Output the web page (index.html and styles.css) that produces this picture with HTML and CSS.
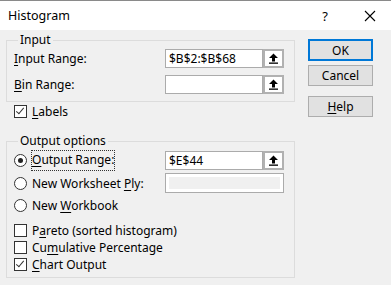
FILE: index.html
```html
<!DOCTYPE html>
<html>
<head>
<meta charset="utf-8">
<link rel="stylesheet" href="styles.css">
</head>
<body>
<div class="titlebar">
  <span class="title">Histogram</span>
  <span class="help-q">?</span>
  <svg class="close" width="12" height="12" viewBox="0 0 12 12"><path d="M1 1L11 11M11 1L1 11" stroke="#000" stroke-width="1.1"/></svg>
</div>
<div class="dialog">
  <div class="left">
    <fieldset class="group group-input">
      <legend>Input</legend>
      <div class="row">
        <span class="lbl"><u>I</u>nput Range:</span>
        <div class="refedit"><span class="box">$B$2:$B$68</span><span class="pick"><svg width="11" height="11" viewBox="0 0 11 11"><path d="M5.5 0.5L1 5H4V8.5H7V5H10Z" fill="#000"/><rect x="1" y="9.5" width="9" height="1.3" fill="#000"/></svg></span></div>
      </div>
      <div class="row">
        <span class="lbl"><u>B</u>in Range:</span>
        <div class="refedit"><span class="box"></span><span class="pick"><svg width="11" height="11" viewBox="0 0 11 11"><path d="M5.5 0.5L1 5H4V8.5H7V5H10Z" fill="#000"/><rect x="1" y="9.5" width="9" height="1.3" fill="#000"/></svg></span></div>
      </div>
    </fieldset>
    <div class="check-row labels-row"><span class="cb checked"></span><span><u>L</u>abels</span></div>
    <fieldset class="group group-output">
      <legend>Output options</legend>
      <div class="row">
        <span class="opt"><span class="radio on"></span><span class="focus"><u>O</u>utput Range:</span></span>
        <div class="refedit"><span class="box">$E$44</span><span class="pick"><svg width="11" height="11" viewBox="0 0 11 11"><path d="M5.5 0.5L1 5H4V8.5H7V5H10Z" fill="#000"/><rect x="1" y="9.5" width="9" height="1.3" fill="#000"/></svg></span></div>
      </div>
      <div class="row row2">
        <span class="opt"><span class="radio"></span><span class="txt">New Worksheet <u>P</u>ly:</span></span>
        <div class="disabled-box"></div>
      </div>
      <div class="opt solo"><span class="radio"></span><span class="txt">New <u>W</u>orkbook</span></div>
      <div class="checks">
        <div class="check-row"><span class="cb"></span><span>P<u>a</u>reto (sorted histogram)</span></div>
        <div class="check-row"><span class="cb"></span><span>Cu<u>m</u>ulative Percentage</span></div>
        <div class="check-row"><span class="cb checked"></span><span><u>C</u>hart Output</span></div>
      </div>
    </fieldset>
  </div>
  <div class="right">
    <button class="btn btn-ok">OK</button>
    <button class="btn">Cancel</button>
    <button class="btn btn-help"><u>H</u>elp</button>
  </div>
</div>
</body>
</html>
```

FILE: styles.css
```css
html, body {
  margin: 0;
  padding: 0;
}
body {
  width: 391px;
  height: 285px;
  overflow: hidden;
  background: #f0f0f0;
  font-family: "Noto Sans", "DejaVu Sans", sans-serif;
  font-size: 12px;
  color: #000;
}
u { text-decoration: underline; text-underline-offset: 2px; }

.titlebar {
  height: 29px;
  background: #fff;
  border-top: 1px solid #8a8a8a;
  display: flex;
  align-items: center;
  padding-left: 8px;
}
.title { font-size: 12.5px; flex: 1; }
.help-q { font-size: 13px; margin-right: 36px; }
.close { margin-right: 15px; }

.dialog {
  display: flex;
  padding-left: 6px;
}
.left { width: 289px; }
.right {
  margin-left: 13px;
  margin-top: 9px;
  display: flex;
  flex-direction: column;
  width: 65px;
}

.group {
  margin: 2px 0 0 0;
  padding: 0;
  border: 1px solid #dcdcdc;
  min-width: 0;
}
.group legend {
  padding: 0 2px;
  margin-left: 4px;
  line-height: 16px;
}
.group-input {
  height: 70px;
  padding: 1px 0 0 7px;
  box-sizing: border-box;
}
.row {
  display: flex;
  align-items: center;
  height: 19px;
  margin-bottom: 7px;
}
.lbl { width: 151px; }
.refedit {
  display: flex;
  height: 19px;
}
.box {
  height: 17px;
  border: 1px solid #ababab;
  background: #fff;
  line-height: 17px;
  padding-left: 3px;
  box-sizing: content-box;
  width: 93px;
}
.pick {
  width: 17px;
  height: 15px;
  border: 2px solid #b1b1b1;
  background: #fff;
  display: flex;
  align-items: center;
  justify-content: center;
}

.check-row {
  display: flex;
  align-items: center;
  height: 17px;
}
.labels-row {
  margin: 1px 0 0 8px;
  height: 16px;
}
.cb {
  width: 11px;
  height: 11px;
  border: 1px solid #333;
  background: #fff;
  margin-right: 5px;
  position: relative;
}
.cb.checked::after {
  content: "";
  position: absolute;
  left: 3px;
  top: 0px;
  width: 3px;
  height: 7px;
  border: solid #333;
  border-width: 0 1px 1px 0;
  transform: rotate(40deg);
}

.group-output {
  margin-top: 14px;
  height: 145px;
  padding: 2px 0 0 7px;
  box-sizing: border-box;
}
.group-output .row { margin-bottom: 3px; }
.group-output .row2 { height: 20px; margin-bottom: 0; }
.opt {
  display: flex;
  align-items: center;
  width: 151px;
}
.opt.solo { height: 24px; }
.radio {
  width: 11px;
  height: 11px;
  border: 1px solid #333;
  border-radius: 50%;
  background: #fff;
  margin-right: 4px;
  position: relative;
}
.radio.on::after {
  content: "";
  position: absolute;
  left: 3px;
  top: 3px;
  width: 5px;
  height: 5px;
  border-radius: 50%;
  background: #222;
}
.focus {
  border: 1px dotted #333;
  padding: 1px 0 2px 0;
  line-height: 16px;
}
.txt { padding-left: 1px; }
.disabled-box {
  width: 113px;
  height: 14px;
  border: 1px solid #ababab;
  background: #f0f0f0;
  box-shadow: inset 0 0 0 3px #fff;
  padding: 2px;
}
.checks {
  margin-top: 5px;
  display: flex;
  flex-direction: column;
}

.btn {
  font-family: inherit;
  font-size: 12px;
  width: 65px;
  height: 21px;
  background: #e1e1e1;
  border: 1px solid #adadad;
  padding: 0;
  margin: 0 0 4px 0;
  color: #000;
}
.btn-ok {
  border: 2px solid #0078d7;
  height: 22px;
}
.btn-help { margin-top: 6px; }
```
